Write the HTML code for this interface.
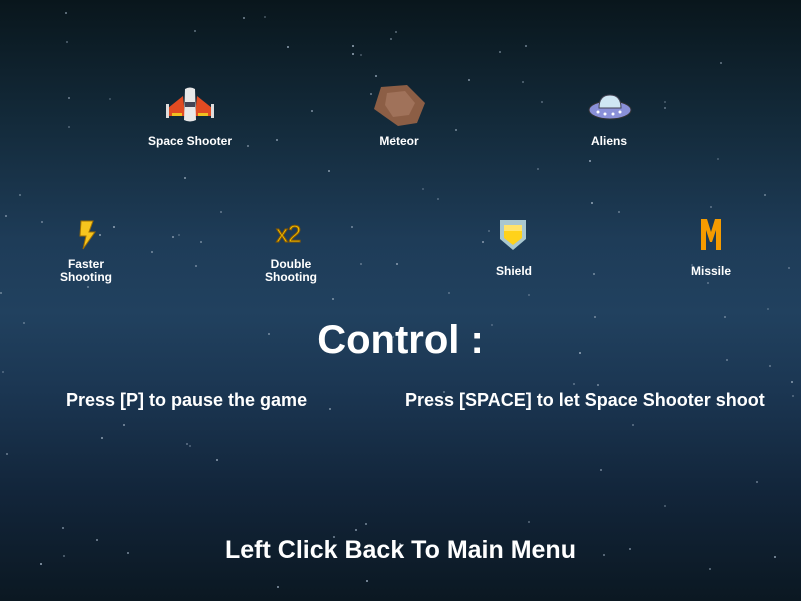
<!DOCTYPE html>
<html><head><style>
html,body{margin:0;padding:0}
body{width:801px;height:601px;overflow:hidden;position:relative;font-family:"Liberation Sans",sans-serif;color:#fff;font-weight:bold;
background:linear-gradient(#09161c 0%,#132a3a 20%,#1e3c58 40%,#21415f 52%,#1b3652 65%,#12253a 82%,#0b1822 100%)}
.t{position:absolute;text-align:center;font-size:12px;line-height:13px;transform:translateX(-50%);white-space:nowrap}
.s{position:absolute;width:2px;height:2px;background:#9ab;border-radius:50%}
svg{position:absolute}
</style></head><body>
<div id="stars"></div>
<script>
var h='';var seed=7;function r(){seed=(seed*9301+49297)%233280;return seed/233280}
for(var i=0;i<110;i++){h+='<div class="s" style="left:'+Math.floor(r()*800)+'px;top:'+Math.floor(r()*600)+'px;opacity:'+(0.4+r()*0.6)+'"></div>'}
document.getElementById('stars').innerHTML=h;
</script>
<svg style="left:165px;top:86px" width="50" height="38" viewBox="0 0 50 38">
<path d="M3 22 L18 10 L20 30 L4 30Z" fill="#e14b22"/><path d="M47 22 L32 10 L30 30 L46 30Z" fill="#e14b22"/>
<rect x="1" y="18" width="3" height="14" fill="#ddd"/><rect x="46" y="18" width="3" height="14" fill="#ddd"/>
<rect x="7" y="27" width="10" height="3" fill="#f0c020"/><rect x="33" y="27" width="10" height="3" fill="#f0c020"/>
<path d="M20 3 Q25 0 30 3 L31 34 Q25 37 19 34Z" fill="#e8e8e8"/><rect x="20" y="16" width="10" height="5" fill="#445"/>
</svg>
<div class="t" style="left:190px;top:135px">Space Shooter</div>
<svg style="left:373px;top:83px" width="54" height="44" viewBox="0 0 54 44">
<path d="M8 4 L34 2 L52 20 L44 40 L25 43 L1 26Z" fill="#8c5e45"/><path d="M14 10 L32 8 L42 20 L36 32 L20 34 L12 22Z" fill="#a0725a"/>
</svg>
<div class="t" style="left:399px;top:135px">Meteor</div>
<svg style="left:587px;top:90px" width="46" height="34" viewBox="0 0 46 34">
<ellipse cx="23" cy="20" rx="21" ry="9" fill="#8a90d8" stroke="#333" stroke-width="1"/>
<path d="M12 18 Q12 5 23 5 Q34 5 34 18Z" fill="#cfe6f3" stroke="#445" stroke-width="1"/>
<circle cx="11" cy="22" r="1.5" fill="#fff"/><circle cx="18" cy="24" r="1.5" fill="#fff"/><circle cx="26" cy="24" r="1.5" fill="#fff"/><circle cx="33" cy="22" r="1.5" fill="#fff"/>
</svg>
<div class="t" style="left:609px;top:135px">Aliens</div>
<svg style="left:75px;top:220px" width="22" height="30" viewBox="0 0 22 30">
<path d="M6 1 L18 1 L14 12 L20 12 L8 29 L11 16 L5 16Z" fill="#f7c51e" stroke="#a07000" stroke-width="1"/>
</svg>
<div class="t" style="left:86px;top:258px">Faster<br>Shooting</div>
<div style="position:absolute;left:276px;top:221px;font-size:24px;color:#f5c400;font-weight:normal;-webkit-text-stroke:1px #8a5a00">x2</div>
<div class="t" style="left:291px;top:258px">Double<br>Shooting</div>
<svg style="left:498px;top:219px" width="30" height="32" viewBox="0 0 30 32">
<path d="M2 1 L28 1 L28 20 L15 31 L2 20Z" fill="#a9c7cf"/><path d="M6 6 L24 6 L24 19 L15 26 L6 19Z" fill="#ffd21a"/><rect x="6" y="6" width="18" height="6" fill="#ffe36a"/>
</svg>
<div class="t" style="left:514px;top:265px">Shield</div>
<svg style="left:700px;top:218px" width="22" height="33" viewBox="0 0 22 33">
<path d="M1 1 H7 L11 14 L15 1 H21 V32 H16 V12 L12 24 H10 L6 12 V32 H1Z" fill="#f59b00"/>
</svg>
<div class="t" style="left:711px;top:265px">Missile</div>
<div style="position:absolute;left:0;width:801px;top:318px;text-align:center;font-size:40px">Control :</div>
<div style="position:absolute;left:66px;top:390px;font-size:18px">Press [P] to pause the game</div>
<div style="position:absolute;left:405px;top:390px;font-size:18px">Press [SPACE] to let Space Shooter shoot</div>
<div style="position:absolute;left:0;width:801px;top:536px;text-align:center;font-size:25px">Left Click Back To Main Menu</div>
</body></html>
